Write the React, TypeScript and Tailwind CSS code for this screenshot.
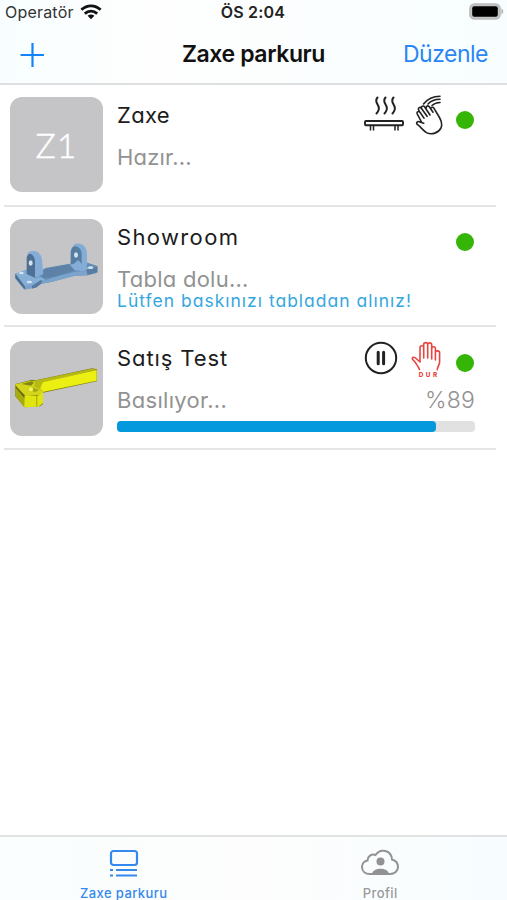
import type { ReactNode } from 'react';

type Printer = {
  name: string;
  nameTracking: string;
  status: string;
  statusTracking: string;
  rowClass: string;
  thumb: ReactNode;
  actions?: ReactNode;
  notice?: string;
  progress?: number;
};

function WifiIcon() {
  return (
    <svg width="22" height="16" viewBox="0 0 22 16" fill="none" stroke="#111" strokeWidth="2.900">
      <path d="M1.400 5.800C7 .6 15 .6 20.600 5.800" />
      <path d="M4.800 9.600c3.700-3.200 8.700-3.200 12.400 0" />
      <path d="M11 15.200l-3.400-3.400c2-1.700 4.800-1.700 6.800 0z" fill="#111" stroke="none" />
    </svg>
  );
}

function BatteryIcon() {
  return (
    <svg width="35" height="17" viewBox="0 0 35 17">
      <rect x="1" y="1" width="30" height="15" rx="4.500" fill="#c4c4c4" stroke="#b9b9b9" strokeWidth="1.600" />
      <rect x="3.200" y="3.200" width="25.600" height="10.600" rx="2" fill="#000" />
      <path d="M32.300 5.500c2.600 1 2.600 5 0 6z" fill="#b5b5b5" />
    </svg>
  );
}

function HeatedBedIcon() {
  return (
    <svg width="40" height="36" viewBox="0 0 40 36" fill="none" stroke="#222" strokeWidth="1.500">
      <path d="M13.500 2.500c-4.500 5 3 7.500 1.300 12-.5 1.600-1.200 2.800-2.300 4M21.500 2.500c-4.500 5 3 7.500 1.300 12-.5 1.600-1.200 2.800-2.300 4M29.500 2.500c-4.500 5 3 7.500 1.300 12-.5 1.600-1.200 2.800-2.300 4" strokeWidth="2" strokeLinecap="round" />
      <rect x="1" y="26" width="38" height="4.200" rx="1" strokeWidth="1.900" />
      <path d="M6.500 30v5.500M9.500 30v5.500M31 30v5.500M34 30v5.500" />
    </svg>
  );
}

function WaveHandIcon() {
  return (
    <svg width="28" height="41" viewBox="0 0 28 41" fill="none" stroke="#222" strokeWidth="1.600" strokeLinecap="round" strokeLinejoin="round">
      <path d="M6.500 27 2.200 18.800c-.8-2 1.700-3.300 2.800-1.500l4 5.800M4.500 17 3.600 14.800c-.8-2 1.600-3.200 2.700-1.500l5.800 8M6.500 13.500c-.7-2.300 1.900-3.300 3.200-1.500l5.300 8M11.300 13c-.3-2 1.700-2.800 3-1.300l3.700 5.500M15.800 13.500c.3-1.600 2.200-1.600 3.200-.2l4.300 7.200c2.700 4.300 4.500 8.500 2.700 12.300-2.300 5-9.300 7.600-14.500 4.800-2.600-1.500-4.600-4-7.300-6.700l-2-1.500c-1.300-1.500 0-3.300 2-2.700l4.500 1.500" />
      <path d="M8.500 9C12.500 4 18 1.400 25 1.300M13 9c3-3.200 7-4.600 12-4.700M17 10.500c2-2 4.500-2.900 8-3" />
    </svg>
  );
}

function PauseIcon() {
  return (
    <svg width="34" height="34" viewBox="0 0 34 34" fill="none" stroke="#222">
      <circle cx="17" cy="17" r="15.200" strokeWidth="2" />
      <path d="M14.200 11.300v11.400M19.600 11.300v11.400" strokeWidth="3" strokeLinecap="round" />
    </svg>
  );
}

function StopHandIcon() {
  return (
    <svg width="32" height="38" viewBox="0 0 32 38" fill="none" stroke="#e8453f" strokeWidth="1.600" strokeLinecap="round" strokeLinejoin="round">
      <path d="M8.500 28.500c-1-3-3-5-4.500-7.500L1.700 18.500C.5 16.800 2.800 15.500 4.500 17L9 21V6.500c0-2.400 3.700-2.400 3.700 0V17M12.700 17V3.500c0-2.500 4-2.500 4 0V17M16.700 17V3.700c0-2.400 4-2.400 4 0V18M20.700 7.500c0-2.400 3.700-2.400 3.700 0V19M24.400 11.700c0-2.500 4.200-2.500 4.200 0V21c0 3-2.300 4.700-2.300 7.700" />
      <text x="18.300" y="36.200" textAnchor="middle" fill="#e8453f" stroke="none" fontFamily="Inter, sans-serif" fontWeight="800" fontSize="6.400" letterSpacing="2.600">DUR</text>
    </svg>
  );
}

function BracketModel() {
  return (
    <svg width="93" height="95" viewBox="0 0 93 95">
      <g transform="translate(-2 21) scale(.3333)" strokeLinejoin="round">
        <path d="M22 101 55 89l48 4 9-9 74-13 20 3 28-7 34 11v20l-30 8-38 1-68 18-34 7-12 10-38 6-27-33z" fill="#628bb3" />
        <path d="m22 101 33-11 42 20 14 8-13 12-46 11z" fill="#86afd7" />
        <path d="m22 101 28 38 2 11-29-37z" fill="#4b6c8d" />
        <path d="m52 138 45-13 40-13 62-17 35-3 34-11v17l-30 8-38 1-68 18-34 7-12 10-36 7z" fill="#7ba3cb" />
        <path d="m106 88 76-15 22 17-66 20-34 4z" fill="#5e82a7" />
        <path d="M56 102V54c2-19 31-28 38-5l6 23 3 33-17 10-12-5z" fill="#4d7094" />
        <path d="M68 34c18-5 31 5 34 25l4 43-20 12-5-3V63c-1-17-13-26-24-20 2-4 6-7 11-9z" fill="#83add6" />
        <path d="M188 72V36c2-22 26-30 37-12l10 22v39l-19-3z" fill="#567da2" />
        <path d="M202 11c20-4 35 9 35 30v37l-16 9V42c0-16-13-27-26-22 1-4 4-7 7-9z" fill="#83add6" />
        <path d="M184 73c14 3 19-7 25-12 9 2 10 14 21 17l16 6-19 10-27-3z" fill="#83add6" />
        <path d="m235 89 33-9v17l-29 8z" fill="#587ca2" />
        <path d="m72 138 25-17 7 1-6 10-13 10-13 4z" fill="#567a9f" />
        <g fill="#d5e3ef">
          <ellipse cx="68" cy="69" rx="6" ry="8" />
          <ellipse cx="204" cy="45" rx="6" ry="8" />
          <ellipse cx="40" cy="99" rx="7" ry="4" />
          <ellipse cx="64" cy="126" rx="8" ry="4" />
          <ellipse cx="248" cy="83" rx="8" ry="4" />
        </g>
      </g>
    </svg>
  );
}

function ArmModel() {
  return (
    <svg width="93" height="95" viewBox="0 0 93 95">
      <g transform="translate(-2 17) scale(.3333)" strokeLinejoin="round">
        <path d="m22 78 49-13 12 2 169-36 15 3v36l-162 34v34l-9 7-46 3-28-33z" fill="#7b7d12" />
        <path d="m75 69 177-37 14 3-163 39-4 21-20-11z" fill="#b7ba15" />
        <path d="M104 73 266 36v32l-162 34-7-11z" fill="#ebef12" />
        <path d="m22 79 46-11 13 3-2 14 26 12v12l-51 6-30-27z" fill="#d3d51b" />
        <path d="M49 113h40l16-11v33l-14 11-43 2z" fill="#e1e50f" />
        <path d="m22 82 27 30v36l-26-32z" fill="#a7aa10" />
        <path d="m23 89 26 31v-9L23 83z" fill="#66690f" />
        <path d="m41 78 29-8 8 4-9 9z" fill="#858713" />
        <path d="m70 87 24 8-13 8-14-7z" fill="#a6a917" />
        <path d="M86 114v31" stroke="#b0b212" strokeWidth="4" />
        <circle cx="69" cy="94" r="6" fill="#f3f55f" />
      </g>
    </svg>
  );
}

function ParkIcon() {
  return (
    <svg width="30" height="29" viewBox="0 0 30 29" fill="none" stroke="#3488ee" strokeWidth="2.200">
      <rect x="2" y="2" width="26" height="14" rx="2.500" />
      <path d="M1 21h3M7 21h21M1 26.500h3M7 26.500h21" />
    </svg>
  );
}

function ProfileIcon() {
  return (
    <svg width="38" height="27" viewBox="0 0 38 27" fill="none" stroke="#929292" strokeWidth="2">
      <path d="M9 25C4 25 1 22 1 18c0-3.500 2.500-6 5.500-6.500 0-4 4-7 8-5.500 5-7.500 16-4.500 16.500 4.500 4 1 6 4 6 7.500 0 4-3.500 7-8 7z" />
      <circle cx="19.500" cy="12.500" r="4" fill="#929292" stroke="none" />
      <path d="M11 25c1-7 16-7 17 0z" fill="#929292" stroke="none" />
    </svg>
  );
}

const printers: Printer[] = [
  {
    name: 'Zaxe',
    nameTracking: 'tracking-[0.300px]',
    status: 'Hazır...',
    statusTracking: 'tracking-[0.200px]',
    rowClass: 'h-[122px] pt-3',
    thumb: <span className="text-[34px] font-light leading-[92px] tracking-[1px] text-white [-webkit-text-stroke:0.4px_white] font-['Lato',sans-serif]">Z1</span>,
    actions: (
      <>
        <HeatedBedIcon />
        <WaveHandIcon />
      </>
    ),
  },
  {
    name: 'Showroom',
    nameTracking: 'tracking-[1.350px]',
    status: 'Tabla dolu...',
    statusTracking: 'tracking-[0.250px]',
    rowClass: 'h-[120px] pt-3',
    thumb: <BracketModel />,
    notice: 'Lütfen baskınızı tabladan alınız!',
  },
  {
    name: 'Satış Test',
    nameTracking: 'tracking-[0.900px]',
    status: 'Basılıyor...',
    statusTracking: 'tracking-[0.300px]',
    rowClass: 'h-[123px] pt-[14px]',
    thumb: <ArmModel />,
    actions: (
      <>
        <PauseIcon />
        <StopHandIcon />
      </>
    ),
    progress: 89,
  },
];

function PrinterRow({ printer }: { printer: Printer }) {
  return (
    <li className={`ml-1 mr-[11px] flex border-b-2 border-[#e5e5e6] pl-1.5 ${printer.rowClass}`}>
      <div className="flex h-[95px] w-[93px] shrink-0 items-center justify-center overflow-hidden rounded-[12px] bg-[#c5c5c7]">
        {printer.thumb}
      </div>
      <div className="ml-[14px] mr-[21px] flex flex-1 flex-col [font-feature-settings:'cv11']">
        <div className="flex h-[46px] justify-between">
          <h2 className={`text-[22px] leading-[27px] text-[#1c1c1c] ${printer.progress ? 'pt-1' : 'pt-[5px]'} ${printer.nameTracking}`}>{printer.name}</h2>
          <div className="flex items-start">
            <div className={`mr-[13px] flex ${printer.progress ? 'mt-0 gap-[13px]' : '-mt-[2px] gap-[11px]'}`}>{printer.actions}</div>
            <span className={`mr-[1.500px] size-[18px] rounded-full bg-[#35b505] ${printer.progress ? 'mt-[13px]' : 'mt-[14px]'}`} />
          </div>
        </div>
        <div className={`flex h-[27px] justify-between text-[22px] text-[#929292] ${printer.progress ? 'leading-[27px]' : 'leading-[29px]'}`}>
          <span className={printer.statusTracking}>{printer.status}</span>
          {printer.progress && <span className="text-[23px] font-light tracking-[0.200px]">%{printer.progress}</span>}
        </div>
        {printer.notice && (
          <p className="-mt-[2px] whitespace-nowrap text-[17.500px] leading-[22px] tracking-[1px] text-[#35a7df]">{printer.notice}</p>
        )}
        {printer.progress && (
          <div className="mt-[7px] h-[11px] overflow-hidden rounded-[4px] bg-[#e1e1e2]">
            <div className="h-full rounded-r-[4px] bg-[#0499dc]" style={{ width: `${printer.progress}%` }} />
          </div>
        )}
      </div>
    </li>
  );
}

export default function App() {
  return (
    <div className="flex h-[900px] w-[507px] flex-col overflow-hidden bg-white font-['Inter',sans-serif]">
      <header className="h-[85px] shrink-0 border-b-2 border-[#dedfe0] bg-gradient-to-r from-[#f8feff] via-[#fefefe] via-30% to-[#f8feff]">
        <div className="grid h-[21px] grid-cols-3 items-center">
          <div className="flex items-center gap-[6px] pl-[5px] text-[16px] text-[#333]">
            <span className="tracking-[0.200px]">Operatör</span>
            <WifiIcon />
          </div>
          <span className="pr-[1px] text-center text-[16px] font-semibold tracking-[0.200px] text-[#222]">ÖS 2:04</span>
          <div className="-mt-0.5 flex justify-end pr-[3px]">
            <BatteryIcon />
          </div>
        </div>
        <div className="grid h-[67px] grid-cols-[1fr_auto_1fr] items-center">
          <button className="ml-5 w-6" aria-label="Ekle">
            <svg width="24" height="24" viewBox="0 0 24 24" stroke="#1682fa" strokeWidth="2.200">
              <path d="M12.500 0v24M.5 12h24" />
            </svg>
          </button>
          <h1 className="text-[23px] font-semibold tracking-[-0.400px] text-[#111]">Zaxe parkuru</h1>
          <button className="pr-[19px] text-right text-[23px] tracking-[-0.500px] text-[#2b86f5]">Düzenle</button>
        </div>
      </header>

      <ul className="flex-1">
        {printers.map((p) => (
          <PrinterRow key={p.name} printer={p} />
        ))}
      </ul>

      <nav className="grid h-[65px] shrink-0 grid-cols-2 border-t-2 border-[#e1e2e2] bg-gradient-to-r from-[#fafefe] via-[#fdfdfd] to-[#f7fdff] text-[13px] font-medium">
        <button className="flex flex-col items-center pr-[6px] pt-3 text-[#3488ee]">
          <ParkIcon />
          <span className="mt-[7px] leading-4 tracking-[0.400px]">Zaxe parkuru</span>
        </button>
        <button className="flex flex-col items-center pt-3 text-[#9a9a9a]">
          <ProfileIcon />
          <span className="mt-[9px] leading-4 tracking-[0.400px]">Profil</span>
        </button>
      </nav>
    </div>
  );
}
